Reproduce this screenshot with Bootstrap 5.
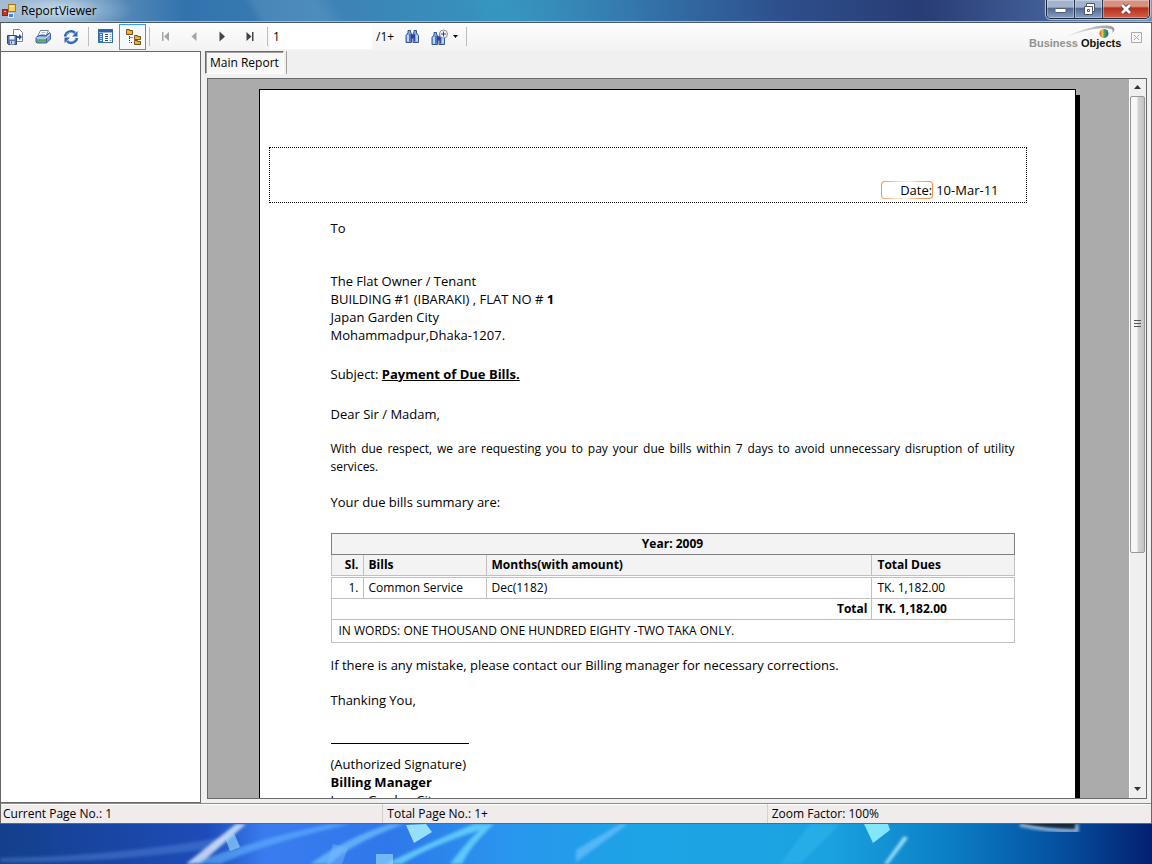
<!DOCTYPE html>
<html lang="en">
<head>
<meta charset="utf-8">
<meta name="viewport" content="width=device-width, initial-scale=1">
<title>ReportViewer</title>
<link href="https://cdn.jsdelivr.net/npm/bootstrap@5.3.0/dist/css/bootstrap.min.css" rel="stylesheet">
<style>
body{font-family:"Open Sans","Noto Sans",sans-serif;font-size:12px;line-height:18px;color:#000;background:#1560b8}
svg{display:block}
.titlebar{height:23px;border-bottom:1px solid #4b5866;box-shadow:inset 0 -1px #8fc0e4;padding-left:2px;
 background:linear-gradient(60deg,transparent 22%,#ffffff18 23% 28%,transparent 30% 41%,#35b0d040 44%,transparent 56%),
 radial-gradient(ellipse 75px 22px at 58px 10px,#c9dcec,#b4cee466 60%,transparent),
 linear-gradient(90deg,#9fb8d0 0,#5f8fba 9%,#3273ad 16%,#3c83b6 30%,#3791bd 42%,#3476ac 55%,#2d4f8c 68%,#293c74 80%,#44639a 92%,#7291ba 100%)}
.titlebar h1{font-size:12px;line-height:22px;margin:0;padding-left:4px}
.caption-set{height:19px;margin-right:2px;border:1px solid #1d2636;border-top:0;border-radius:0 0 5px 5px;overflow:hidden;box-shadow:0 0 1px 1px #b9cbe3}
.caption-set button{border:0;padding:0;width:28px;display:flex;align-items:center;justify-content:center;background:linear-gradient(#a3b3cb 0 40%,#50698f 45%,#86a1c6);box-shadow:inset 0 0 0 1px #ffffff55;border-right:1px solid #28354d}
.caption-set .quit{width:46px;background:linear-gradient(#d69181 0 35%,#b5301c 45%,#d6604a);border:0}
.frame{border-left:1px solid #666;border-right:1px solid #666;background:#f0f0f0;min-height:0}
.tools{height:28px;background:linear-gradient(#fdfdfd,#f3f3f3)}
.tool{width:28px;height:26px;padding:0;border:1px solid transparent;background:none;display:flex;align-items:center;justify-content:center}
.tool.picked{width:27px;border-color:#3399ff;background:#f6fafe}
.tool.wide{width:37px;gap:4px}
.tool.narrow{width:22px}
.split{width:6px;display:flex;justify-content:center}
.split::before{content:"";width:1px;height:19px;background:#bdbdbd}
.page-no{width:102px;height:24px;border:0;padding:0 3px;font-size:12px;line-height:18px;background:#fff;color:#000;outline:0}
.panes{min-height:0}
.groups{flex:0 0 200px;background:#fff;border:1px solid #696969;border-left:0}
.main-tab{height:23px;border:1px solid #fff;border-top-color:#696969;border-left-color:#696969;background:#f8f8f8;padding:1px 4px 0;font-size:12px;color:#000;box-shadow:inset 1px 1px #a0a0a0}
.tab-end{width:1px;height:23px;background:#a0a0a0;margin-left:2px}
.logo-area{margin-top:-26px}
.brand{width:92px;font:bold 11px/11px "Liberation Sans",Arial,sans-serif;color:#929292;white-space:nowrap}
.brand b{color:#111}
.viewport{border:1px solid #696969;background:#ababab;min-height:0;margin-left:2px}
.canvas{padding-right:3px}
.sheet{width:817px;margin:10px auto 0;border:1px solid #000;border-bottom:0;background:#fff;box-shadow:4px 6px #000;font-size:13px;padding:57px 48px 0 9px}
.letterhead{height:56px;border:1px dotted #000;padding:0 27px 3px 0}
.datebox{width:52px;height:18px;line-height:16px;text-align:right;border:1px solid transparent;border-radius:4px;margin-right:3px;
 background:linear-gradient(#fff,#fff) padding-box,linear-gradient(100deg,#f08a34,#f9c9a0 25%,#fff0e2 50%,#f5a562 75%,#f08a34) border-box}
.letter{margin-left:62px;margin-right:12px}
.g17{margin:0 0 17px}.g21{margin:0 0 21px}.g22{margin:0 0 22px}.g35{margin:0 0 35px}
.request{font-size:12px;text-align:justify}
.dues{width:100%;table-layout:fixed;border-collapse:collapse;font-size:12px;line-height:18px;margin-bottom:13px}
.dues th,.dues td{border:1px solid #c0c0c0;padding:1px 5px;height:21px}
.dues thead th{background:#f3f3f3}
.dues .year th{border-color:#808080;text-align:center}
.dues .heads th{border-bottom:3px double #c0c0c0}
.dues .words{height:23px;padding-left:7px}
.dues .num{text-align:right;padding:1px 4px}
.col-sl{width:32px}.col-bill{width:123px}.col-due{width:142px}
.signline{width:138px;border-top:1px solid #000;margin:34px 0 11px}
.scroller{width:17px;background:#efefef;border-left:1px solid #fff}
.scroller button{border:0;background:none;height:17px;padding:0;display:flex;align-items:center;justify-content:center}
.thumb{flex:2 0 0;border:1px solid #979797;border-radius:2px;background:linear-gradient(90deg,#f6f6f6 0 45%,#d3d3d6 55%,#c4c4c8);width:15px}
.track{flex:1 0 0}
.status{height:21px;border-top:1px solid #8c8c8c;border-bottom:1px solid #5c6a72;background:#f0eceb;box-shadow:inset 0 1px #fff;line-height:19px;font-size:12px}
.status div{flex:1 1 0;padding-left:2px}
.status div + div{border-left:1px solid #d4d0cf;padding-left:4px}
.wallpaper svg{width:100%;height:40px}
</style>
</head>
<body class="vh-100 d-flex flex-column overflow-hidden">
<header class="titlebar d-flex align-items-start justify-content-between">
  <div class="d-flex">
    <svg class="mt-1" width="15" height="15" viewBox="0 0 15 15" aria-hidden="true"><rect x=".5" y="5.500" width="5" height="6" fill="#c8311f" stroke="#8c2618"/><rect x="6.500" y=".5" width="7" height="7" fill="#ffd052" stroke="#a77912"/><rect x="6.500" y="9.500" width="5" height="4" fill="#4f83dc" stroke="#e0eaf8"/><path d="M2 7.500h2M8 2.500h4" stroke="#fff" opacity=".6"/></svg>
    <h1>ReportViewer</h1>
  </div>
  <div class="caption-set d-flex">
    <button type="button" aria-label="Minimize"><svg width="13" height="12"><rect x="1" y="5.500" width="11" height="4" rx="1" fill="#fff" stroke="#555f70"/></svg></button>
    <button type="button" aria-label="Restore"><svg width="14" height="14"><path d="M4.500 1.500h8v8h-2v3h-8v-8h2z" fill="#fff" stroke="#4c5667"/><path d="M5.500 7.500h2v2h-2zM4.500 4.500h6v5" fill="none" stroke="#4c5667"/></svg></button>
    <button class="quit" type="button" aria-label="Close"><svg width="14" height="12"><path d="M3 2l8 8M11 2l-8 8" stroke="#5a3a3c" stroke-width="4.500"/><path d="M3 2l8 8M11 2l-8 8" stroke="#fff" stroke-width="2.800"/></svg></button>
  </div>
</header>

<main class="frame flex-grow-1 d-flex flex-column">
  <div class="tools d-flex align-items-center">
    <button class="tool" aria-label="Export report"><svg width="16" height="16"><path d="M6.500 .5h6l3 3v9h-9z" fill="#fff" stroke="#7a8296"/><path d="M12 5l3 3-3 3z" fill="#134a8e"/><path d="M8.500 8h4" stroke="#2a6db8" stroke-width="2"/><path d="M.5 6.500h9v9h-8l-1-1z" fill="#5475b8" stroke="#2c4680"/><path d="M2.500 7h5v3.500h-5z" fill="#edf2fb"/><path d="M3 12h4.500v3.500H3z" fill="#cfd8ea"/><path d="M4.500 12.500v2" stroke="#2c4680"/></svg></button>
    <button class="tool" aria-label="Print report"><svg width="16" height="16"><path d="M5.500 1.500h8l-3 6h-8z" fill="#fff" stroke="#7583a8"/><path d="M6.500 3.500h4M5.500 5.500h4" stroke="#a9bce0"/><path d="M1 8.500l3-2h7.500l3-3 1 1.500v5l-4 4H2l-1-1z" fill="#7ea2dc" stroke="#425c95"/><path d="M1.500 9h9.500l4-4" fill="none" stroke="#dae7fb"/><path d="M2 11.500h9" stroke="#45b83a" stroke-width="2"/><path d="M11.500 9.500v4" stroke="#425c95"/></svg></button>
    <button class="tool" aria-label="Refresh report"><svg width="16" height="16"><path d="M2 7.500C3 2.500 9 1 12 4" fill="none" stroke="#3464ae" stroke-width="2.600"/><path d="M14.500 2v5.500H9z" fill="#3464ae"/><path d="M14 9c-1 4.500-7 6.500-10 3" fill="none" stroke="#3464ae" stroke-width="2.600"/><path d="M1.500 14V8.500H7z" fill="#3464ae"/><path d="M3.500 6C5 3 9 3 11 4.500M12.500 10.500c-2 2.500-5 3-7.500 1" fill="none" stroke="#8cb2e6"/></svg></button>
    <span class="split"></span>
    <button class="tool" aria-label="Toggle parameter panel"><svg width="15" height="15"><rect x=".5" y=".5" width="14" height="13" fill="#fff" stroke="#326fab"/><path d="M1 2h13" stroke="#2a62a5" stroke-width="3"/><path d="M1 4h4v9.500H1z" fill="#3576bd"/><path d="M2 5.500h2M2 7.500h2M2 9.500h2M2 11.500h2" stroke="#d2e5fa"/><path d="M7 5.500h3M7 7.500h3M7 9.500h3M7 11.500h3" stroke="#39495e"/><path d="M11.500 5.500h2M11.500 7.500h2M11.500 9.500h2M11.500 11.500h2" stroke="#7da3cc"/></svg></button>
    <button class="tool picked" aria-label="Toggle group tree" aria-pressed="true"><svg width="16" height="16"><path d="M4.500 5v8.500H8M4.500 8.500H8" fill="none" stroke="#333" stroke-dasharray="1 1"/><g fill="#f2b62e" stroke="#715016"><path d="M1.500 1.500v-1h3v1h3v4h-6z"/><path d="M9.500 7.500v-1h3v1h3v3h-6z"/><path d="M9.500 12.500v-1h3v1h3v3h-6z"/></g></svg></button>
    <span class="split"></span>
    <button class="tool" aria-label="First page"><svg width="10" height="12"><path d="M1 1h1.500v9H1zM8 1v9L3 5.500z" fill="#a5a5a5"/></svg></button>
    <button class="tool" aria-label="Previous page"><svg width="8" height="12"><path d="M6.500 1v9L1.500 5.500z" fill="#a5a5a5"/></svg></button>
    <button class="tool" aria-label="Next page"><svg width="8" height="12"><path d="M1.500 .5v10L7 5.500z" fill="#444"/></svg></button>
    <button class="tool" aria-label="Last page"><svg width="10" height="12"><path d="M1.500 1v9l5-4.500zM7 1h1.500v9H7z" fill="#444"/></svg></button>
    <span class="split"></span>
    <input class="page-no" type="text" value="1" aria-label="Current page">
    <span class="px-1">/1+</span>
    <button class="tool" aria-label="Find text"><svg width="15" height="15"><g id="lens"><path d="M3 1.500h2.500V3L6.500 5v8.500h-5.500V6.500L3 4zM9 1.500h2.500V4L13.500 6.500v7H8V5l1-2z" fill="#82aee0" stroke="#2f5697"/><path d="M6 5.500h3v4H6z" fill="#393a9c"/><path d="M5 5v7.500M9.500 5v7.500" stroke="#3a4aa8" stroke-width="1.200"/><path d="M3 6v6.500M12 6v6.500" stroke="#e4f2ff" stroke-width="1.200"/></g></svg></button>
    <button class="tool wide" aria-label="Zoom"><svg width="18" height="16"><use href="#lens" y="2"/><circle cx="12.500" cy="5" r="4" fill="#f4f4fc" stroke="#8d8b91"/><path d="M12.500 2.500v5M10 5h5" stroke="#3b3b9b"/></svg><svg width="6" height="4"><path d="M0 0h5L2.500 3z"/></svg></button>
    <span class="split"></span>
  </div>

  <div class="panes d-flex flex-grow-1 gap-1">
    <aside class="groups"></aside>
    <section class="flex-grow-1 d-flex flex-column pe-1 pb-1">
      <div class="d-flex align-items-start justify-content-between pb-1">
        <div class="d-flex">
          <button class="main-tab">Main Report</button><span class="tab-end"></span>
        </div>
        <div class="logo-area d-flex gap-1 position-relative">
          <div class="brand"><svg width="91" height="13" aria-hidden="true"><defs><linearGradient id="ball"><stop offset="0" stop-color="#e83b31"/><stop offset=".3" stop-color="#f5cb37"/><stop offset=".55" stop-color="#42ab4f"/><stop offset="1" stop-color="#314bc4"/></linearGradient><linearGradient id="arc"><stop offset="0" stop-color="#eee"/><stop offset="1" stop-color="#999"/></linearGradient></defs><path d="M37 12C54 3 80-3 85 3c1 2 0 4-2 5 1-2 1-3-1-4C76 2 60 3 37 12z" fill="url(#arc)"/><circle cx="75" cy="8.500" r="4.500" fill="url(#ball)"/></svg>Business <b>Objects</b></div>
          <button class="tool narrow" aria-label="Close view"><svg width="11" height="11"><path d="M.5 .5h10v10H.5zM3 3l5 5M8 3L3 8" fill="none" stroke="#aaa"/></svg></button>
        </div>
      </div>
      <div class="viewport flex-grow-1 d-flex">
        <div class="canvas flex-grow-1 overflow-hidden">
          <article class="sheet">
            <div class="letterhead d-flex align-items-end justify-content-end mb-3">
              <div class="datebox">Date:</div><div>10-Mar-11</div>
            </div>
            <div class="letter">
              <p class="g35">To</p>
              <p class="g21">The Flat Owner / Tenant<br>BUILDING #1 (IBARAKI) , FLAT NO # <b>1</b><br>Japan Garden City<br>Mohammadpur,Dhaka-1207.</p>
              <p class="g22">Subject: <b><u>Payment of Due Bills.</u></b></p>
              <p class="g17">Dear Sir / Madam,</p>
              <p class="g17 request">With due respect, we are requesting you to pay your due bills within 7 days to avoid unnecessary disruption of utility services.</p>
              <p class="g22">Your due bills summary are:</p>
              <table class="dues">
                <colgroup><col class="col-sl"><col class="col-bill"><col><col class="col-due"></colgroup>
                <thead>
                  <tr class="year"><th colspan="4">Year: 2009</th></tr>
                  <tr class="heads"><th class="num">Sl.</th><th>Bills</th><th>Months(with amount)</th><th>Total Dues</th></tr>
                </thead>
                <tbody>
                  <tr><td class="num">1.</td><td>Common Service</td><td>Dec(1182)</td><td>TK. 1,182.00</td></tr>
                  <tr><th class="num" colspan="3">Total</th><th>TK. 1,182.00</th></tr>
                  <tr><td class="words" colspan="4">IN WORDS: ONE THOUSAND ONE HUNDRED EIGHTY -TWO TAKA ONLY.</td></tr>
                </tbody>
              </table>
              <p class="g17">If there is any mistake, please contact our Billing manager for necessary corrections.</p>
              <p class="m-0">Thanking You,</p>
              <div class="signline"></div>
              <p class="m-0">(Authorized Signature)<br><b>Billing Manager</b><br>Japan Garden City</p>
            </div>
          </article>
        </div>
        <div class="scroller d-flex flex-column">
          <button aria-label="Scroll up"><svg width="8" height="5"><path d="M0 4h7L3.500 0z" fill="#333"/></svg></button>
          <div class="thumb d-flex align-items-center justify-content-center"><svg width="7" height="8"><path d="M0 .5h7M0 3.500h7M0 6.500h7" stroke="#555"/></svg></div>
          <div class="track"></div>
          <button aria-label="Scroll down"><svg width="8" height="5"><path d="M0 0h7L3.500 4z" fill="#333"/></svg></button>
        </div>
      </div>
    </section>
  </div>
  <footer class="status d-flex"><div>Current Page No.: 1</div><div>Total Page No.: 1+</div><div>Zoom Factor: 100%</div></footer>
</main>

<div class="wallpaper">
  <svg viewBox="0 0 1152 40" preserveAspectRatio="none" aria-hidden="true">
    <defs>
      <linearGradient id="sky"><stop offset="0" stop-color="#143f8c"/><stop offset=".18" stop-color="#1d4cb8"/><stop offset=".23" stop-color="#3a7cf0"/><stop offset=".34" stop-color="#2f78ea"/><stop offset=".44" stop-color="#2996ee"/><stop offset=".56" stop-color="#1ca4e6"/><stop offset=".72" stop-color="#1aa2e0"/><stop offset=".82" stop-color="#0b80c6"/><stop offset=".92" stop-color="#0550a0"/><stop offset="1" stop-color="#041f70"/></linearGradient>
      <filter id="soft"><feGaussianBlur stdDeviation="1.500"/></filter>
    </defs>
    <rect width="1152" height="40" fill="url(#sky)"/>
    <g filter="url(#soft)">
      <path d="M0 34Q120 32 230 12L215 24Q100 40 0 38z" fill="#5c8fe0" opacity=".4"/>
      <path d="M236 0h10L200 40h-14z" fill="#e2edff" opacity=".8"/>
      <path d="M190 40Q260 14 330 0h20Q270 18 220 40z" fill="#62b4ff" opacity=".6"/>
      <path d="M310 40Q350 12 390 0h14Q350 20 330 40z" fill="#7dd0ff" opacity=".6"/>
      <path d="M385 40Q440 14 474 0h20Q470 22 462 40h-12Q470 14 480 6 430 22 402 40z" fill="#6fdcff" opacity=".75"/>
      <path d="M576 26L620 0h8L576 38z" fill="#6bc0ff" opacity=".7"/>
      <path d="M780 40L810 0h30L800 40z" fill="#3cc0f4" opacity=".35"/>
      <path d="M904 12l-20 28h4l20-26z" fill="#b9f5ff" opacity=".8"/>
    </g>
    <path d="M406 1l20-1 6 8-18 11z" fill="#a9f0ff" opacity=".85"/>
    <path d="M225 14l9-5 6 14-10 4zM376 30h17v10h-17z" fill="#9fe2ff" opacity=".6"/>
    <path d="M333 20l15 4-6 16h-15z" fill="#7abaff" opacity=".45"/>
    <path d="M864 0h24l2 6-17 13z" fill="#8ff0ff" opacity=".9"/>
    <path d="M1020 0h55v5q-25 0-55-5z" fill="#132a38"/><path d="M1020 1q28 6 57 6V0" fill="none" stroke="#a5bfdc" stroke-width="3" filter="url(#soft)"/>
  </svg>
</div>
<script src="https://cdn.jsdelivr.net/npm/bootstrap@5.3.0/dist/js/bootstrap.bundle.min.js"></script>
</body>
</html>
